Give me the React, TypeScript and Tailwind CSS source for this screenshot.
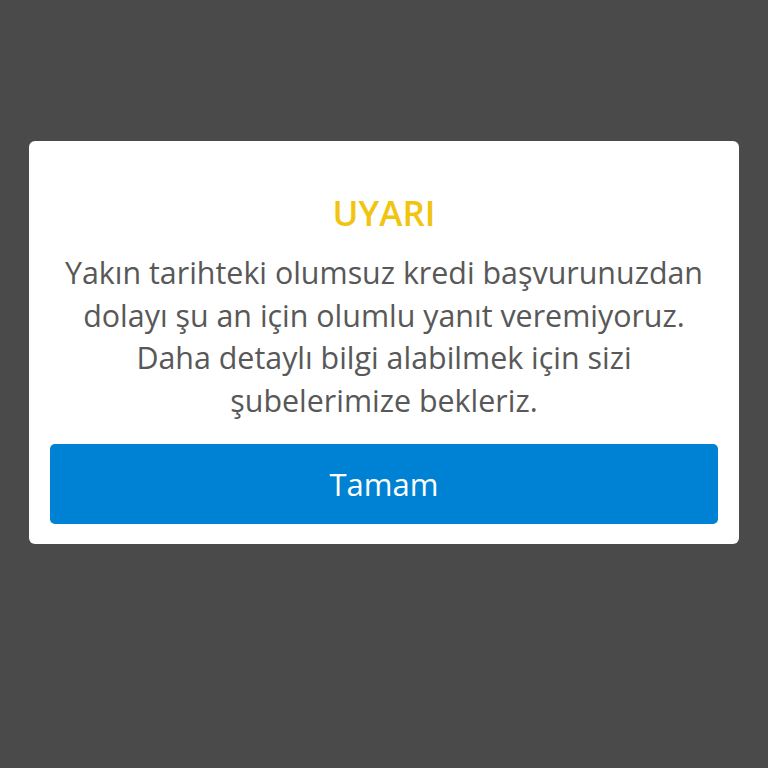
export default function App() {
  return (
    <div
      className="flex h-[768px] w-[768px] items-start justify-center bg-[#4a4a4a] pt-[141px]"
      style={{ fontFamily: '"Open Sans", "Noto Sans", sans-serif' }}
    >
      <div className="flex w-[710px] flex-col items-center rounded-[6px] bg-white px-[21px] pb-[20px] pt-[50px]">
        <h1 className="text-[35px] font-semibold leading-[44px] text-[#f1c40f]">UYARI</h1>
        <p className="mt-[17px] text-center text-[30.4px] leading-[42.5px] text-[#585858]">
          Yakın tarihteki olumsuz kredi başvurunuzdan
          <br />
          dolayı şu an için olumlu yanıt veremiyoruz.
          <br />
          Daha detaylı bilgi alabilmek için sizi
          <br />
          şubelerimize bekleriz.
        </p>
        <button className="mt-[22px] flex h-[80px] w-full items-center justify-center rounded-[5px] bg-[#0082d4] text-[31px] text-white">
          Tamam
        </button>
      </div>
    </div>
  );
}
